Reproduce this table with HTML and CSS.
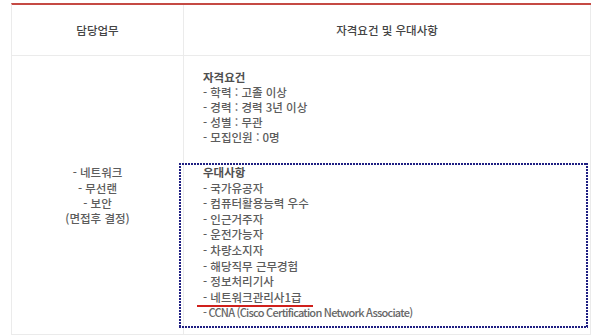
FILE: index.html
```html
<!DOCTYPE html>
<html lang="ko">
<head>
<meta charset="utf-8">
<link rel="stylesheet" href="styles.css">
</head>
<body>
<div class="table">
  <div class="cell head">담당업무</div>
  <div class="cell head">자격요건 및 우대사항</div>
  <div class="cell duty">
    <div>- 네트워크</div>
    <div>- 무선랜</div>
    <div>- 보안</div>
    <div>(면접후 결정)</div>
  </div>
  <div class="cell req">
    <div class="block">
      <div class="title">자격요건</div>
      <div>- 학력 : 고졸 이상</div>
      <div>- 경력 : 경력 3년 이상</div>
      <div>- 성별 : 무관</div>
      <div>- 모집인원 : 0명</div>
    </div>
    <div class="block pref">
      <div class="title">우대사항</div>
      <div>- 국가유공자</div>
      <div>- 컴퓨터활용능력 우수</div>
      <div>- 인근거주자</div>
      <div>- 운전가능자</div>
      <div>- 차량소지자</div>
      <div>- 해당직무 근무경험</div>
      <div>- 정보처리기사</div>
      <div><span class="mark">- 네트워크관리사1급</span></div>
      <div class="latin">- CCNA (Cisco Certification Network Associate)</div>
    </div>
  </div>
</div>
</body>
</html>
```
FILE: styles.css
```css
html, body {
  margin: 0;
  padding: 0;
  background: #ffffff;
}
body {
  font-family: "Noto Sans CJK KR", "Noto Sans", sans-serif;
  font-size: 11.5px;
  font-weight: 500;
  color: #5c5c5c;
}
.table {
  margin: 3px 0 0 11px;
  width: 579px;
  display: grid;
  grid-template-columns: 172px 1fr;
  border-top: 2px solid #c54a44;
  border-left: 1px solid #ebebeb;
}
.cell {
  box-sizing: border-box;
  border-right: 1px solid #ebebeb;
  border-bottom: 1px solid #ebebeb;
}
.head {
  height: 51px;
  display: flex;
  align-items: center;
  justify-content: center;
  color: #444444;
  font-size: 11.5px;
  padding-bottom: 1px;
}
.duty {
  display: flex;
  flex-direction: column;
  justify-content: center;
  align-items: center;
  line-height: 15.3px;
  padding-top: 2px;
}
.req {
  padding: 14px 0 13px 19px;
  line-height: 15px;
}
.title {
  font-weight: bold;
  color: #505050;
}
.pref {
  position: relative;
  margin-top: 20px;
  line-height: 15.6px;
}
.pref::before {
  content: "";
  position: absolute;
  left: -24px;
  right: 2px;
  top: -2px;
  bottom: -7px;
  background:
    repeating-linear-gradient(90deg, #1f1f82 0 2px, transparent 2px 3px) top / 100% 2px no-repeat,
    repeating-linear-gradient(90deg, #1f1f82 0 2px, transparent 2px 3px) bottom / 100% 2px no-repeat,
    repeating-linear-gradient(180deg, #1f1f82 0 2px, transparent 2px 3px) left / 2px 100% no-repeat,
    repeating-linear-gradient(180deg, #1f1f82 0 2px, transparent 2px 3px) right / 2px 100% no-repeat;
}
.mark {
  position: relative;
}
.mark::after {
  content: "";
  position: absolute;
  left: -6px;
  right: -11px;
  bottom: -2px;
  height: 2px;
  background: #d0201c;
}
.latin {
  font-size: 11px;
  letter-spacing: -0.75px;
  color: #666666;
}
```
